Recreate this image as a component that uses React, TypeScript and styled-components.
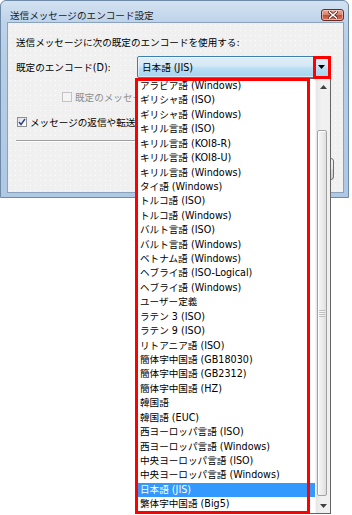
import React from "react";
import styled, { createGlobalStyle } from "styled-components";

const GlobalStyle = createGlobalStyle`
  html, body { margin: 0; padding: 0; background: #ffffff; }
  body {
    font-family: "DejaVu Sans", "Noto Sans CJK JP", sans-serif;
    font-size: 9.6px;
    color: #000;
  }
  * { box-sizing: border-box; }
`;

const Stage = styled.div`
  position: relative;
  width: 352px;
  height: 515px;
  overflow: hidden;
  background: #ffffff;
`;

const Window = styled.div`
  width: 349px;
  display: flex;
  flex-direction: column;
  background: linear-gradient(180deg, #d3e2f1 0px, #bed3ea 21px, #b6cde6 60px, #afc8e3 100%);
  border: 1px solid #6f8aa6;
  border-radius: 6px 6px 0 0;
  padding: 0 4px 4px 6px;
`;

const TitleBar = styled.div`
  height: 21px;
  display: flex;
  align-items: flex-start;
  justify-content: space-between;
  padding: 7px 0 0 3px;
`;

const Title = styled.span`
  line-height: 14px;
  margin-top: 1px;
  color: #1b1b1b;
  white-space: nowrap;
`;

const CloseButton = styled.div`
  width: 23px;
  height: 12px;
  margin-top: 1px;
  border: 1px solid #6b2a24;
  border-radius: 3px;
  background: linear-gradient(180deg, #eaa898 0%, #d88470 45%, #c44d38 55%, #d67a60 100%);
  display: flex;
  align-items: center;
  justify-content: center;
  box-shadow: inset 0 0 0 1px rgba(255, 220, 210, 0.55);
`;

const Content = styled.div`
  display: flex;
  flex-direction: column;
  border: 1px solid #8aa2bb;
  background-color: #f0f0f0;
  background-image: radial-gradient(circle, rgba(255, 255, 255, 0.9) 0.6px, transparent 0.9px);
  background-size: 5px 5px;
  padding: 13px 12px 12px 8px;
  overflow: hidden;
`;

const TextRow = styled.div`
  height: 14px;
  line-height: 14px;
  white-space: nowrap;
`;

const EncodingRow = styled.div`
  margin-top: 6px;
  display: grid;
  grid-template-columns: 121px 194px;
  align-items: center;
  height: 22px;
`;

const Label = styled.span`
  line-height: 14px;
  padding-top: 2px;
  white-space: nowrap;
`;

const Combo = styled.div`
  height: 22px;
  display: flex;
  align-items: center;
  border: 1px solid #3c7fb1;
  border-radius: 2px;
  background: linear-gradient(180deg, #e3eef7 0%, #d3e8f6 45%, #bbdff5 55%, #a5d3f0 100%);
  box-shadow: inset 0 0 0 1px rgba(255, 255, 255, 0.5);
`;

const ComboText = styled.span`
  flex: 1;
  padding-left: 4px;
  line-height: 14px;
  padding-top: 1px;
  white-space: nowrap;
`;

const ComboArrow = styled.div`
  width: 17px;
  height: 100%;
  display: flex;
  align-items: center;
  justify-content: center;
`;

/* the row is clipped where the open drop-down list begins (x = 136) */
const CheckRow = styled.div<{ $indent: number; $gap: number; $visible: number }>`
  margin-top: ${(p) => p.$gap}px;
  margin-left: ${(p) => p.$indent}px;
  width: ${(p) => p.$visible}px;
  height: 14px;
  display: flex;
  align-items: center;
  gap: 3px;
  white-space: nowrap;
  overflow: hidden;
`;

const CheckBox = styled.div<{ $disabled?: boolean }>`
  width: 10px;
  height: 10px;
  flex: none;
  border: 1px solid ${(p) => (p.$disabled ? "#c3c3c3" : "#8e8f8f")};
  background: ${(p) =>
    p.$disabled
      ? "#f4f4f4"
      : "linear-gradient(135deg, #dcdcdc 0%, #f6f6f6 60%, #ffffff 100%)"};
  display: flex;
  align-items: center;
  justify-content: center;
`;

const CheckText = styled.span<{ $disabled?: boolean }>`
  line-height: 14px;
  padding-top: 1px;
  color: ${(p) => (p.$disabled ? "#8d8d8d" : "#000")};
`;

const Separator = styled.div`
  margin-top: 11px;
  height: 2px;
  border-top: 1px solid #a0a0a0;
  border-bottom: 1px solid #ffffff;
`;

const ButtonRow = styled.div`
  margin-top: 16px;
  margin-right: -3px;
  display: flex;
  justify-content: flex-end;
`;

const PushButton = styled.div`
  width: 64px;
  height: 22px;
  border: 1px solid #707070;
  border-radius: 3px;
  background: linear-gradient(180deg, #f2f2f2 0%, #ebebeb 50%, #dddddd 50%, #cfcfcf 100%);
`;

const DropList = styled.div`
  position: absolute;
  left: 136px;
  top: 78px;
  width: 195px;
  height: 436px;
  border: 1px solid #646464;
  background: #ffffff;
  display: flex;
`;

const Items = styled.div`
  flex: 1;
  display: flex;
  flex-direction: column;
  overflow: hidden;
`;

const Item = styled.div<{ $selected?: boolean }>`
  height: 14.43px;
  flex: none;
  line-height: 14.43px;
  padding-left: 3px;
  white-space: nowrap;
  color: ${(p) => (p.$selected ? "#ffffff" : "#000000")};
  background: ${(p) => (p.$selected ? "#3399ff" : "transparent")};
`;

const ScrollBar = styled.div`
  width: 15px;
  flex: none;
  display: flex;
  flex-direction: column;
  background: linear-gradient(90deg, #e6e6e6 0%, #f1f1f1 40%, #f0f0f0 100%);
  border-left: 1px solid #f6f6f6;
`;

const ScrollButton = styled.div`
  height: 15px;
  flex: none;
  display: flex;
  align-items: center;
  justify-content: center;
`;

const Track = styled.div`
  flex: 1;
  display: flex;
  flex-direction: column;
  padding: 36px 3px 2px 1px;
`;

const Thumb = styled.div`
  flex: 1;
  border: 1px solid #a2a2a2;
  border-radius: 2px;
  background: linear-gradient(90deg, #f4f4f4 0%, #ececec 55%, #dedede 100%);
  box-shadow: inset 1px 1px 0 #ffffff;
  display: flex;
  align-items: center;
  justify-content: center;
`;

const Grip = styled.div`
  width: 6px;
  height: 7px;
  background: repeating-linear-gradient(180deg, #8a8a8a 0px, #8a8a8a 1px, #ffffff 1px, #ffffff 2px);
  opacity: 0.45;
`;

const RedFrame = styled.div<{ $l: number; $t: number; $w: number; $h: number }>`
  position: absolute;
  left: ${(p) => p.$l}px;
  top: ${(p) => p.$t}px;
  width: ${(p) => p.$w}px;
  height: ${(p) => p.$h}px;
  border: 3px solid #ff0000;
  pointer-events: none;
`;

const encodings = [
  "アラビア語 (Windows)",
  "ギリシャ語 (ISO)",
  "ギリシャ語 (Windows)",
  "キリル言語 (ISO)",
  "キリル言語 (KOI8-R)",
  "キリル言語 (KOI8-U)",
  "キリル言語 (Windows)",
  "タイ語 (Windows)",
  "トルコ語 (ISO)",
  "トルコ語 (Windows)",
  "バルト言語 (ISO)",
  "バルト言語 (Windows)",
  "ベトナム語 (Windows)",
  "ヘブライ語 (ISO-Logical)",
  "ヘブライ語 (Windows)",
  "ユーザー定義",
  "ラテン 3 (ISO)",
  "ラテン 9 (ISO)",
  "リトアニア語 (ISO)",
  "簡体字中国語 (GB18030)",
  "簡体字中国語 (GB2312)",
  "簡体字中国語 (HZ)",
  "韓国語",
  "韓国語 (EUC)",
  "西ヨーロッパ言語 (ISO)",
  "西ヨーロッパ言語 (Windows)",
  "中央ヨーロッパ言語 (ISO)",
  "中央ヨーロッパ言語 (Windows)",
  "日本語 (JIS)",
  "繁体字中国語 (Big5)",
];

const CloseX = () => (
  <svg width="10" height="8" viewBox="0 0 10 8">
    <path d="M1.5 1 L8.5 7 M8.5 1 L1.5 7" stroke="#5a1e18" strokeWidth="3" strokeLinecap="square" />
    <path d="M1.5 1 L8.5 7 M8.5 1 L1.5 7" stroke="#ffffff" strokeWidth="1.6" strokeLinecap="square" />
  </svg>
);

const DownTriangle = ({ color = "#000" }: { color?: string }) => (
  <svg width="7" height="4" viewBox="0 0 7 4">
    <path d="M0 0 H7 L3.5 4 Z" fill={color} />
  </svg>
);

const UpTriangle = () => (
  <svg width="7" height="4" viewBox="0 0 7 4">
    <path d="M0 4 H7 L3.5 0 Z" fill="#404040" />
  </svg>
);

const CheckMark = () => (
  <svg width="8" height="8" viewBox="0 0 8 8">
    <path d="M1 4 L3 6.5 L7 1" fill="none" stroke="#27408b" strokeWidth="1.4" />
  </svg>
);

export default function App() {
  return (
    <>
      <GlobalStyle />
      <Stage>
        <Window>
          <TitleBar>
            <Title>送信メッセージのエンコード設定</Title>
            <CloseButton>
              <CloseX />
            </CloseButton>
          </TitleBar>
          <Content>
            <TextRow>送信メッセージに次の既定のエンコードを使用する:</TextRow>
            <EncodingRow>
              <Label>既定のエンコード(D):</Label>
              <Combo>
                <ComboText>日本語 (JIS)</ComboText>
                <ComboArrow>
                  <DownTriangle />
                </ComboArrow>
              </Combo>
            </EncodingRow>
            <CheckRow $indent={46} $gap={12} $visible={74}>
              <CheckBox $disabled />
              <CheckText $disabled>既定のメッセージ</CheckText>
            </CheckRow>
            <CheckRow $indent={1} $gap={11} $visible={119}>
              <CheckBox>
                <CheckMark />
              </CheckBox>
              <CheckText>メッセージの返信や転送</CheckText>
            </CheckRow>
            <Separator />
            <ButtonRow>
              <PushButton />
            </ButtonRow>
          </Content>
        </Window>

        <DropList>
          <Items>
            {encodings.map((e) => (
              <Item key={e} $selected={e === "日本語 (JIS)"}>
                {e}
              </Item>
            ))}
          </Items>
          <ScrollBar>
            <ScrollButton>
              <UpTriangle />
            </ScrollButton>
            <Track>
              <Thumb>
                <Grip />
              </Thumb>
            </Track>
            <ScrollButton>
              <DownTriangle color="#404040" />
            </ScrollButton>
          </ScrollBar>
        </DropList>

        <RedFrame $l={135} $t={78} $w={175} $h={436} />
        <RedFrame $l={313} $t={56} $w={18} $h={23} />
      </Stage>
    </>
  );
}
